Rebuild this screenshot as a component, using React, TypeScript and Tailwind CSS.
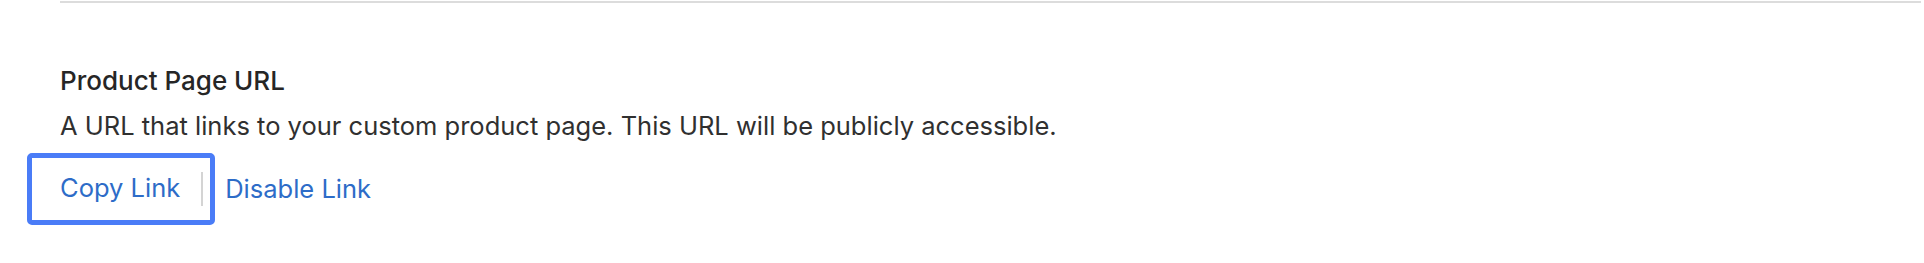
export default function App() {
  return (
    <div
      className="w-[1924px] h-[263px] bg-white pl-[60px] pr-[3px] pt-[1px]"
      style={{ fontFamily: 'Inter, "Noto Sans", sans-serif' }}
    >
      <div className="border-t-2 border-[#dcdcdc]" />
      <div className="pt-[62px]">
        <h3 className="text-[26px] font-medium leading-[32px] text-[#262626]">Product Page URL</h3>
        <p className="mt-[13px] text-[25.5px] leading-[32px] text-[#303030]">
          A URL that links to your custom product page. This URL will be publicly accessible.
        </p>
        <div className="mt-[11px] -ml-[33px] flex items-center">
          <button className="flex h-[72px] items-center rounded-[5px] border-[5px] border-[#4a7cf7] pb-[2px] pl-[28px] pr-[7px] text-[25.5px] text-[#2d6cc8]">
            <span>Copy Link</span>
            <span className="ml-[21px] mt-[2px] h-[34px] w-[2px] bg-[#d4d4d4]" />
          </button>
          <a className="ml-[10px] text-[25.5px] text-[#2d6cc8]">Disable Link</a>
        </div>
      </div>
    </div>
  );
}
